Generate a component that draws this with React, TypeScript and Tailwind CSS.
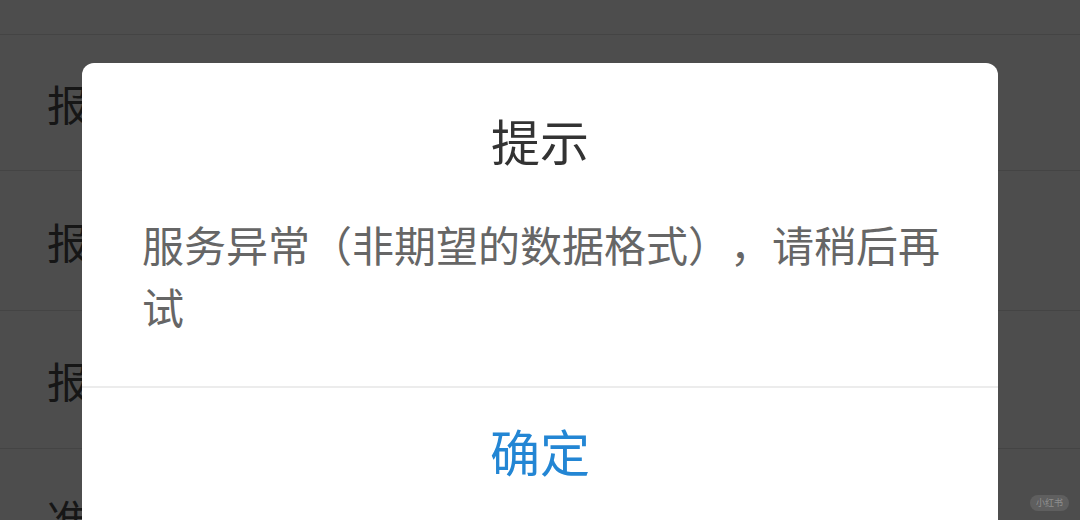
const rows = [
  { label: "报表查询", h: "h-[136px]" },
  { label: "报销申请", h: "h-[140px]" },
  { label: "报告记录", h: "h-[138px]" },
  { label: "准入管理", h: "h-[138px]" },
];

function ListBackground() {
  return (
    <div className="flex flex-col">
      <div className="h-[35px] border-b border-[#444444]" />
      {rows.map((r) => (
        <div
          key={r.label}
          className={`${r.h} flex items-center border-b border-[#444444] pl-[47px] text-[42px] text-[#161616]`}
        >
          {r.label}
        </div>
      ))}
    </div>
  );
}

function AlertDialog() {
  return (
    <div className="absolute left-[82px] top-[63px] w-[916px] rounded-t-[12px] bg-white pb-[40px]">
      <div className="pt-[46px] text-center text-[49px] leading-[62px] text-[#333333]">
        提示
      </div>
      <p className="mt-[42px] pl-[60px] pr-[56px] text-[42px] leading-[62px] text-[#666666] [text-spacing-trim:space-all]">
        服务异常（非期望的数据格式），请稍后再试
      </p>
      <div className="mt-[49px] h-[2px] bg-[#ececec]" />
      <button className="flex h-[124px] w-full items-center justify-center text-[50px] text-[#2386d4]">
        确定
      </button>
    </div>
  );
}

export default function App() {
  return (
    <div
      className="relative h-[520px] w-[1080px] overflow-hidden bg-[#4d4d4d]"
      style={{ fontFamily: '"Noto Sans CJK SC", "Noto Sans", sans-serif' }}
    >
      <ListBackground />
      <AlertDialog />
      <div className="absolute bottom-[9px] right-[11px] rounded-full bg-white/10 px-[6px] py-[2px] text-[9px] leading-[12px] text-white/30">
        小红书
      </div>
    </div>
  );
}
